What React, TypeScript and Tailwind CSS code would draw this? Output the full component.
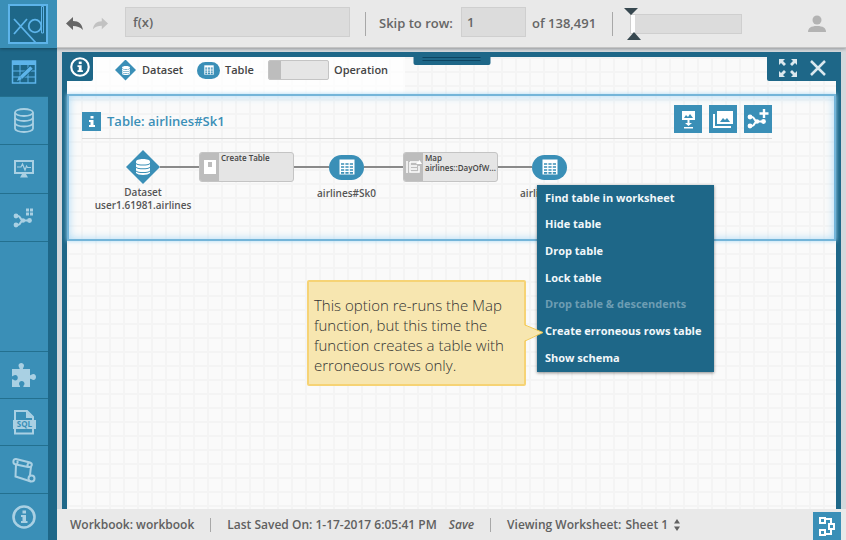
import type { ReactNode } from 'react';

const GRID =
  'bg-[#fafafa] bg-[linear-gradient(#f4f4f4_2px,transparent_2px),linear-gradient(90deg,#f4f4f4_2px,transparent_2px)] bg-[size:14px_14px]';

type IconProps = { className?: string };

function LogoIcon() {
  return (
    <svg viewBox="0 0 57 48" className="h-12 w-[57px]" fill="none" stroke="#5db4ea" aria-hidden="true">
      <rect x="9" y="5" width="38" height="38" fill="#1e6788" strokeWidth="2" />
      <path d="M14 19l22 24M27 19L14 34" strokeWidth="1.800" />
      <circle cx="35" cy="26" r="6.300" strokeWidth="1.800" />
      <path d="M41.500 33V6.500h2V33z" strokeWidth="1" />
    </svg>
  );
}

function UndoIcon({ className }: IconProps) {
  return (
    <svg viewBox="0 0 18 14" className={className} fill="currentColor" aria-hidden="true">
      <path d="M7 0v4c6 0 9 3 10 9-3-3-6-4-10-4v4L0 6.500z" />
    </svg>
  );
}

function WorksheetIcon() {
  return (
    <svg viewBox="0 0 26 26" className="size-[26px]" fill="none" stroke="currentColor" strokeWidth="1.500" aria-hidden="true">
      <rect x="1.500" y="2" width="23" height="22" />
      <path d="M1 4h24" strokeWidth="4" />
      <path d="M1 12h24M1 18h24M9 5v19M17 5v19" strokeWidth="1" />
      <path d="M10 18.500L20 9" stroke="#1e6788" strokeWidth="5" />
      <path d="M10 18.500L20.500 8.500" strokeWidth="3.500" />
      <path d="M6 22l2-5 3 3z" fill="currentColor" stroke="none" />
    </svg>
  );
}

function DatabaseIcon({ className }: IconProps) {
  return (
    <svg viewBox="0 0 20 25" className={className} fill="none" stroke="currentColor" strokeWidth="1.800" aria-hidden="true">
      <ellipse cx="10" cy="4.500" rx="9" ry="3.500" />
      <path d="M1 4.500v5c0 2 4 3.500 9 3.500s9-1.500 9-3.500v-5" />
      <path d="M1 9.500v5.500c0 2 4 3.500 9 3.500s9-1.500 9-3.500V9.500" />
      <path d="M1 15v5.500c0 2 4 3.500 9 3.500s9-1.500 9-3.500V15" />
    </svg>
  );
}

function SolidDatabaseIcon({ className }: IconProps) {
  return (
    <svg viewBox="0 0 14 16" className={className} fill="currentColor" aria-hidden="true">
      <path d="M0 2.500C0 1 3 0 7 0s7 1 7 2.500V4c-2 2-12 2-14 0z" />
      <path d="M0 5c2 2 12 2 14 0v2.800c-2 2-12 2-14 0z" />
      <path d="M0 8.800c2 2 12 2 14 0v2.800c-2 2-12 2-14 0z" />
      <path d="M0 12.500c2 2 12 2 14 0V14c-2 2.500-12 2.500-14 0z" />
    </svg>
  );
}

function MonitorIcon() {
  return (
    <svg viewBox="0 0 20 18" className="h-[18px] w-5" fill="none" stroke="currentColor" aria-hidden="true">
      <rect x="1" y="1" width="18" height="12" strokeWidth="2" />
      <path d="M3 7h4l1.500-3 2.500 6 1.500-4 1 1.500H17" strokeWidth="1.200" />
      <path d="M8 14h4l2 3.500H6z" fill="currentColor" stroke="none" />
    </svg>
  );
}

function FlowIcon({ className, plus = false }: IconProps & { plus?: boolean }) {
  return (
    <svg viewBox="0 0 22 20" className={className} fill="none" stroke="currentColor" strokeWidth="2" aria-hidden="true">
      <path d="M3 8h2c3 0 2 4.500 5 4.500h6.500M3 17h2c3 0 2-4.500 5-4.500" />
      <circle cx="3" cy="8" r="2.400" fill="currentColor" stroke="none" />
      <circle cx="3" cy="17" r="2.400" fill="currentColor" stroke="none" />
      <circle cx="10" cy="12.500" r="2.200" fill="currentColor" stroke="none" />
      <circle cx="16.500" cy="12.500" r="2.400" fill="currentColor" stroke="none" />
      {plus ? (
        <path d="M17 0v9M12.500 4.500h9" strokeWidth="2.400" />
      ) : (
        <path d="M13 2h3M17 2h3M13 6h3M17 6h3" strokeWidth="3" />
      )}
    </svg>
  );
}

function PuzzleIcon() {
  return (
    <svg viewBox="0 0 24 24" className="size-6" fill="currentColor" aria-hidden="true">
      <path d="M0 6h7.500c.8-1-1-1.500-1-3.500C6.500 1 7.800 0 9.200 0S12 1 12 2.500c0 2-1.500 2.500-1 3.500h7v6c1 .8 1.500-1 3.500-1 1.500 0 2.500 1.400 2.500 3s-1 3-2.500 3c-2 0-2.500-1.800-3.500-1v8h-6.500c-.8-1 1-1.500 1-3.200 0-1.500-1.300-2.800-2.800-2.800S7 19.300 7 20.800c0 1.700 1.500 2.200 1 3.200H0v-7.500c1-.8 1.500 1 3.300 1 1.500 0 2.500-1.200 2.500-2.700s-1-2.800-2.500-2.800c-1.800 0-2.300 1.800-3.300 1z" />
    </svg>
  );
}

function SqlIcon() {
  return (
    <svg viewBox="0 0 24 26" className="h-[26px] w-6" aria-hidden="true">
      <path d="M3 12V2h12l6 6v4M3 19v5.500h18V19" fill="none" stroke="currentColor" strokeWidth="2" />
      <path d="M14 2v7h7z" fill="currentColor" />
      <rect x="1" y="11" width="23" height="9" fill="currentColor" />
      <text x="12.500" y="18" textAnchor="middle" fontSize="8" fontWeight="700" fill="#3a8fb7">SQL</text>
    </svg>
  );
}

function ScrollIcon() {
  return (
    <svg viewBox="0 0 24 26" className="h-[26px] w-6" fill="none" stroke="currentColor" strokeWidth="2" aria-hidden="true">
      <path d="M4 7.500L3.500 19.500 19 24.500M19 9.500l-1 8.500" />
      <path d="M4 7.500C0 7 1 1.500 4 2l14 3.500c3 1 2 5-1 4.500-3-1-1-4.500 1-4.500M4 7.500L16 10M4 7.500c2-.5 2-3 1-4" />
      <circle cx="19.500" cy="21.500" r="3" />
    </svg>
  );
}

function InfoIcon({ className }: IconProps) {
  return (
    <svg viewBox="0 0 24 24" className={className} aria-hidden="true">
      <circle cx="12" cy="12" r="10.500" fill="none" stroke="currentColor" strokeWidth="2.600" />
      <rect x="10.500" y="5.500" width="3.500" height="3" fill="currentColor" />
      <path d="M9 10h5v6h1.500v2H9v-2h1.500v-4H9z" fill="currentColor" />
    </svg>
  );
}

function TableIcon({ className }: IconProps) {
  return (
    <svg viewBox="0 0 16 16" className={className} aria-hidden="true">
      <rect x="0.500" y="0.500" width="15" height="15" fill="#fff" />
      <path d="M2 5h12M2 8h12M2 11h12M2 13.800h12" stroke="#3a8fb7" strokeWidth="1.700" strokeDasharray="3.200 1.200" />
    </svg>
  );
}

function PersonIcon() {
  return (
    <svg viewBox="0 0 18 18" className="size-[18px]" fill="#b3b3b3" aria-hidden="true">
      <circle cx="9" cy="5" r="4.500" />
      <path d="M0 17c0-4 3-6 9-6s9 2 9 6z" />
    </svg>
  );
}

function ExpandIcon() {
  return (
    <svg viewBox="0 0 20 20" className="size-5" aria-hidden="true">
      <path d="M1 1h6L5 3l3 3-2 2-3-3-2 2zM19 1v6l-2-2-3 3-2-2 3-3-2-2zM1 19v-6l2 2 3-3 2 2-3 3 2 2zM19 19h-6l2-2-3-3 2-2 3 3 2-2z" fill="currentColor" />
    </svg>
  );
}

function SaveImageIcon() {
  return (
    <svg viewBox="0 0 28 28" className="size-7" aria-hidden="true">
      <rect x="8" y="6" width="13" height="9" fill="#fff" />
      <path d="M10 13l2-3 2 2 2-3 3 4z" fill="#3a8fb7" />
      <path d="M13.500 15h2v3H18l-3.500 3-3.500-3h2.500zM10 22h9v1.500h-9z" fill="#fff" />
    </svg>
  );
}

function GalleryIcon() {
  return (
    <svg viewBox="0 0 28 28" className="size-7" aria-hidden="true">
      <rect x="8" y="6" width="16" height="13" fill="#fff" />
      <path d="M5 9v13h17" fill="none" stroke="#fff" strokeWidth="2" />
      <path d="M11 17l3-4 2 2 2-2 3 4z" fill="#3a8fb7" />
    </svg>
  );
}

function Diamond({ className, children }: { className: string; children: ReactNode }) {
  return (
    <span className={`grid shrink-0 place-items-center bg-[#3a8fb7] text-white [clip-path:polygon(50%_0,100%_50%,50%_100%,0_50%)] ${className}`}>
      {children}
    </span>
  );
}

function SideButton({ label, className = '', children }: { label: string; className?: string; children: ReactNode }) {
  return (
    <button
      type="button"
      aria-label={label}
      className={`flex shrink-0 items-center justify-center border-t border-[#23708f] bg-[#3a8fb7] text-[#a9d0e3] ${className}`}
    >
      {children}
    </button>
  );
}

function Separator() {
  return <span className="h-6 w-px shrink-0 bg-[#a8a8a8]" />;
}

function Connector({ className }: { className: string }) {
  return <span className={`h-0.5 shrink-0 bg-[#8a8a8a] ${className}`} />;
}

function NodeLabel({ children }: { children: ReactNode }) {
  return (
    <span className="absolute top-full left-1/2 -translate-x-1/2 text-center text-[10px] leading-[13px] font-semibold whitespace-nowrap text-[#555]">
      {children}
    </span>
  );
}

function Operation({ title, detail, children }: { title: string; detail?: string; children: ReactNode }) {
  return (
    <div className="flex h-[30px] w-[95px] shrink-0 overflow-hidden rounded-[3px] border border-[#c4c4c4] bg-[#e5e5e5]">
      <span className="grid w-[19px] shrink-0 place-items-center bg-[#bdbdbd]">{children}</span>
      <span className="min-w-0 pl-[2px] text-[8px] leading-[10px] font-semibold whitespace-nowrap text-[#444]">
        <span className="block">{title}</span>
        {detail && <span className="block">{detail}</span>}
      </span>
    </div>
  );
}

function TableNode({ label, children }: { label: string; children?: ReactNode }) {
  return (
    <div className="relative flex h-[25px] w-[35px] shrink-0 items-center justify-center rounded-full bg-[#3a8fb7]">
      <TableIcon className="size-4" />
      <div className="absolute inset-x-0 top-8">
        <NodeLabel>{label}</NodeLabel>
      </div>
      {children}
    </div>
  );
}

const MENU = [
  'Find table in worksheet',
  'Hide table',
  'Drop table',
  'Lock table',
  'Drop table & descendents',
  'Create erroneous rows table',
  'Show schema',
];

function ContextMenu() {
  return (
    <div className="absolute top-[30px] left-[5px] z-20 w-[177px] bg-[#1e6788] shadow-[0_1px_3px_rgba(0,0,0,0.45)]">
      <div role="menu" className="flex h-[187px] flex-col">
        {MENU.map((item) => (
          <button
            key={item}
            type="button"
            role="menuitem"
            disabled={item.includes('&')}
            className="flex-1 px-2 text-left text-[11px] font-bold whitespace-nowrap text-[#f2f7fa] disabled:text-[#6d9db3]"
          >
            {item}
          </button>
        ))}
      </div>
      <div
        role="note"
        className="absolute top-[95px] -left-[230px] h-[106px] w-[219px] rounded-[2px] border-2 border-[#f6d375] bg-[#f7e6b0] px-[5px] pt-[13px] text-[15px] leading-5 font-light text-[#333]"
      >
        This option re-runs the Map function, but this time the function creates a table with erroneous rows only.
        <svg viewBox="0 0 20 18" className="absolute top-[42px] -right-5 h-[18px] w-5" aria-hidden="true">
          <path d="M0 1l19 7.500L0 17z" fill="#f7e6b0" />
          <path d="M1 1l18 7.500L1 17" fill="none" stroke="#f3c94f" />
        </svg>
      </div>
    </div>
  );
}

function Header() {
  return (
    <header className="relative z-10 flex h-12 shrink-0 items-center border-b border-[#c4c4c4] bg-[#e9e9e9] text-[13px] font-semibold text-[#666] shadow-[0_1px_3px_rgba(0,0,0,0.3)]">
      <div className="w-[57px] shrink-0 bg-[#3a8fb7]">
        <LogoIcon />
      </div>
      <button type="button" aria-label="Undo" className="ml-[9px] shrink-0 text-[#666]">
        <UndoIcon className="h-[14px] w-[18px]" />
      </button>
      <button type="button" aria-label="Redo" className="ml-2 shrink-0 -scale-x-100 text-[#c2c2c2]">
        <UndoIcon className="h-[14px] w-4" />
      </button>
      <input
        aria-label="Function"
        defaultValue="f(x)"
        className="mr-[15px] mb-1 ml-[17px] h-[30px] min-w-0 flex-1 border border-[#cfcfcf] bg-[#dcdcdc] px-[7px]"
      />
      <Separator />
      <label htmlFor="row" className="ml-[13px] w-[76px] shrink-0 whitespace-nowrap">Skip to row:</label>
      <input id="row" defaultValue="1" className="mb-1 ml-[6px] h-[30px] w-[65px] shrink-0 border border-[#cfcfcf] bg-[#dcdcdc] px-[5px]" />
      <span className="ml-[6px] w-20 shrink-0 whitespace-nowrap">of 138,491</span>
      <Separator />
      <div className="relative mr-[66px] ml-[17px] h-5 w-[112px] shrink-0 border border-[#cfcfcf] bg-[#dcdcdc]">
        <span className="block h-full w-1 bg-white" />
        <svg viewBox="0 0 18 34" className="absolute -top-[8px] -left-[7px] h-[34px] w-[18px]" fill="#374850" aria-hidden="true">
          <path d="M0 1h14L7 8zM3 33h14l-7-8z" />
        </svg>
      </div>
      <button type="button" aria-label="Account" className="mr-5 shrink-0">
        <PersonIcon />
      </button>
    </header>
  );
}

function Sidebar() {
  return (
    <nav aria-label="Main" className="flex w-[57px] shrink-0 flex-col bg-[#1e6788] pr-[9px]">
      <button type="button" aria-label="Worksheets" className="flex h-12 shrink-0 items-center justify-center text-[#5db4ea]">
        <WorksheetIcon />
      </button>
      <SideButton label="Datasets" className="h-12"><DatabaseIcon className="h-[25px] w-5" /></SideButton>
      <SideButton label="Monitor" className="h-[49px]"><MonitorIcon /></SideButton>
      <SideButton label="Dataflow" className="h-12"><FlowIcon className="h-5 w-[22px]" /></SideButton>
      <div className="flex-1 border-t border-[#23708f] bg-[#3a8fb7]" />
      <SideButton label="Extensions" className="h-[47px]"><PuzzleIcon /></SideButton>
      <SideButton label="SQL" className="h-[47px]"><SqlIcon /></SideButton>
      <SideButton label="Scripts" className="h-12"><ScrollIcon /></SideButton>
      <SideButton label="Help" className="h-[47px]"><InfoIcon className="size-6" /></SideButton>
    </nav>
  );
}

function LegendBar() {
  return (
    <div className="relative flex h-[37px] shrink-0 items-start text-[11px] font-semibold text-[#444]">
      <div className="flex h-full w-[338px] items-start bg-white/70">
        <button type="button" aria-label="Legend" className="flex h-6 w-[26px] shrink-0 items-center justify-center rounded-br-[2px] bg-[#1e6788] text-white">
          <InfoIcon className="mb-1 size-5" />
        </button>
        <div className="flex h-[26px] items-center pl-[22px]">
          <Diamond className="size-[21px]"><SolidDatabaseIcon className="h-[9px] w-2" /></Diamond>
          <span className="ml-[6px] w-[55px]">Dataset</span>
          <span className="grid h-[17px] w-[23px] place-items-center rounded-full bg-[#3a8fb7]"><TableIcon className="size-[10px]" /></span>
          <span className="ml-[5px] w-[43px]">Table</span>
          <span className="flex h-5 w-[61px] shrink-0 overflow-hidden rounded-[2px] border border-[#c4c4c4] bg-[#e5e5e5]"><span className="w-3 bg-[#bdbdbd]" /></span>
          <span className="ml-[5px]">Operation</span>
        </div>
      </div>
      <div className="absolute top-0 left-1/2 flex h-2 w-[77px] -translate-x-1/2 flex-col items-center gap-[2px] rounded-b-[2px] bg-[#1e6788]">
        <span className="h-px w-[58px] bg-[#0d4562]" />
        <span className="h-px w-[58px] bg-[#0d4562]" />
      </div>
      <div className="ml-auto flex h-6 w-[69px] items-center gap-3 rounded-bl-[2px] bg-[#1e6788] pb-[2px] pl-[11px] text-[#dbe8ee]">
        <button type="button" aria-label="Full screen"><ExpandIcon /></button>
        <button type="button" aria-label="Close">
          <svg viewBox="0 0 16 16" className="size-4" stroke="currentColor" strokeWidth="2.500" aria-hidden="true">
            <path d="M1 1l14 14M15 1L1 15" />
          </svg>
        </button>
      </div>
    </div>
  );
}

function GraphCard() {
  return (
    <section className="relative z-10 h-[147px] shrink-0 border-2 border-[#74b5d9] px-[13px] pt-[9px] shadow-[0_0_4px_#a9d9f5,inset_0_0_8px_#a9d9f5]">
      <div className="flex h-[34px] max-w-[690px] items-start border-b border-[#dadada]">
        <span className="mt-[7px] grid size-[19px] place-items-center bg-[#3a8fb7] text-white">
          <svg viewBox="0 0 6 11" className="h-[11px] w-[6px]" fill="currentColor" aria-hidden="true">
            <path d="M1.500 0h3v2.500h-3zM0 4h4.500v5H6v2H0V9h1.500V6H0z" />
          </svg>
        </span>
        <h1 className="mt-[6px] ml-[6px] text-[13px] leading-5 font-semibold text-[#3a8fb7]">Table: airlines#Sk1</h1>
        <div className="ml-auto flex gap-[7px]">
          <button type="button" aria-label="Save image" className="size-7 bg-[#3a8fb7]"><SaveImageIcon /></button>
          <button type="button" aria-label="Open image" className="size-7 bg-[#3a8fb7]"><GalleryIcon /></button>
          <button type="button" aria-label="Add dataflow" className="grid size-7 place-items-center bg-[#3a8fb7] text-white"><FlowIcon plus className="h-5 w-[22px]" /></button>
        </div>
      </div>
      <div className="mt-[11px] flex items-center pl-11">
        <div className="relative">
          <Diamond className="size-[34px]"><SolidDatabaseIcon className="h-4 w-[14px]" /></Diamond>
          <div className="absolute inset-x-0 top-9">
            <NodeLabel>Dataset<br />user1.61981.airlines</NodeLabel>
          </div>
        </div>
        <Connector className="w-[39px]" />
        <Operation title="Create Table">
          <svg viewBox="0 0 12 14" className="h-[14px] w-3" aria-hidden="true">
            <rect width="12" height="14" fill="#fff" />
            <rect x="4" y="2" width="4" height="5" fill="#bdbdbd" />
          </svg>
        </Operation>
        <Connector className="w-[35px]" />
        <TableNode label="airlines#Sk0" />
        <Connector className="w-[39px]" />
        <Operation title="Map" detail="airlines::DayOfW...">
          <svg viewBox="0 0 16 14" className="h-[14px] w-4" fill="none" stroke="#fff" strokeWidth="1.500" aria-hidden="true">
            <path d="M1 1v12M4 2h8M4 2v10h9V6M5 6h6M5 9h6" />
            <path d="M10 4l3.500-4L16 4z" fill="#fff" stroke="none" />
          </svg>
        </Operation>
        <Connector className="w-[34px]" />
        <TableNode label="airlines#Sk1">
          <ContextMenu />
        </TableNode>
      </div>
    </section>
  );
}

function Footer() {
  return (
    <footer className="flex h-[31px] shrink-0 items-center bg-[#e9e9e9] pr-[5px] pl-[13px] text-xs font-semibold whitespace-nowrap text-[#606060]">
      <span className="mr-4">Workbook: workbook</span>
      <span className="h-[14px] w-px bg-[#a8a8a8]" />
      <span className="ml-4">Last Saved On: 1-17-2017 6:05:41 PM</span>
      <button type="button" className="mr-4 ml-3 italic">Save</button>
      <span className="h-[14px] w-px bg-[#a8a8a8]" />
      <label htmlFor="sheet" className="ml-4">Viewing Worksheet:</label>
      <select id="sheet" className="ml-1 appearance-none bg-transparent">
        <option>Sheet 1</option>
      </select>
      <svg viewBox="0 0 6 12" className="ml-[6px] h-3 w-[6px] shrink-0" fill="#606060" aria-hidden="true">
        <path d="M3 0l3 4.500H0zM0 7.500h6L3 12z" />
      </svg>
      <button type="button" aria-label="Show dataflow" className="mt-[3px] ml-auto size-7 shrink-0 bg-[#3a8fb7]">
        <svg viewBox="0 0 28 28" className="size-7" fill="none" stroke="#fff" strokeWidth="2" aria-hidden="true">
          <rect x="7" y="6" width="5" height="5" />
          <rect x="7" y="18" width="5" height="5" />
          <rect x="16" y="12" width="5" height="5" />
          <path d="M12 7h6v5M18 17v5h-6" />
        </svg>
      </button>
    </footer>
  );
}

export default function App() {
  return (
    <div className="flex h-screen flex-col overflow-hidden font-['Open_Sans','Noto_Sans',sans-serif]">
      <Header />
      <div className="flex min-h-0 flex-1">
        <Sidebar />
        <div className="flex min-w-0 flex-1 flex-col bg-[#d4d8dc]">
          <main className="mx-[5px] mt-1 flex min-h-0 flex-1 flex-col border-x-[5px] border-t-[5px] border-[#1e6788]">
            <div className={`flex min-h-0 flex-1 flex-col ${GRID}`}>
              <LegendBar />
              <GraphCard />
            </div>
          </main>
          <Footer />
        </div>
      </div>
    </div>
  );
}
